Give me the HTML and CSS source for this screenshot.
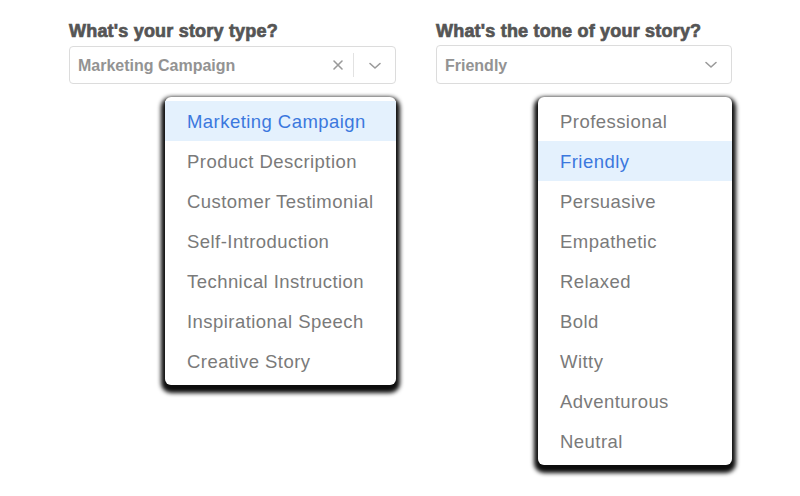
FILE: index.html
```html
<!DOCTYPE html>
<html>
<head>
<meta charset="utf-8">
<link rel="stylesheet" href="styles.css">
</head>
<body>
<div class="page">
  <div class="field field-type">
    <div class="label">What's your story type?</div>
    <div class="select">
      <span class="value">Marketing Campaign</span>
      <span class="clear">
        <svg width="12" height="12" viewBox="0 0 12 12"><path d="M2 2 L10 10 M10 2 L2 10" stroke="#9a9a9a" stroke-width="1.6" fill="none" stroke-linecap="round"/></svg>
      </span>
      <span class="sep"></span>
      <span class="chev">
        <svg width="14" height="8" viewBox="0 0 14 8"><path d="M2 1.5 L7 6 L12 1.5" stroke="#9a9a9a" stroke-width="1.6" fill="none" stroke-linecap="round" stroke-linejoin="round"/></svg>
      </span>
    </div>
    <div class="menu menu-type">
      <div class="item active">Marketing Campaign</div>
      <div class="item">Product Description</div>
      <div class="item">Customer Testimonial</div>
      <div class="item">Self-Introduction</div>
      <div class="item">Technical Instruction</div>
      <div class="item">Inspirational Speech</div>
      <div class="item">Creative Story</div>
    </div>
  </div>
  <div class="field field-tone">
    <div class="label label-tone">What's the tone of your story?</div>
    <div class="select">
      <span class="value">Friendly</span>
      <span class="chev chev-solo">
        <svg width="14" height="8" viewBox="0 0 14 8"><path d="M2 1.5 L7 6 L12 1.5" stroke="#9a9a9a" stroke-width="1.6" fill="none" stroke-linecap="round" stroke-linejoin="round"/></svg>
      </span>
    </div>
    <div class="menu menu-tone">
      <div class="item">Professional</div>
      <div class="item active">Friendly</div>
      <div class="item">Persuasive</div>
      <div class="item">Empathetic</div>
      <div class="item">Relaxed</div>
      <div class="item">Bold</div>
      <div class="item">Witty</div>
      <div class="item">Adventurous</div>
      <div class="item">Neutral</div>
    </div>
  </div>
</div>
</body>
</html>
```

FILE: styles.css
```css
html, body {
  margin: 0;
  padding: 0;
  background: #ffffff;
}
body {
  font-family: "Liberation Sans", Arial, sans-serif;
  width: 800px;
  height: 496px;
  overflow: hidden;
}
.page {
  display: flex;
  gap: 40px;
  padding: 21px 0 0 69px;
}
.field {
  display: flex;
  flex-direction: column;
  align-items: flex-end;
}
.field-type { width: 327px; }
.field-tone { width: 296px; }
.label {
  align-self: flex-start;
  font-size: 18px;
  font-weight: bold;
  line-height: 20px;
  color: #555555;
  letter-spacing: 0.2px;
  -webkit-text-stroke: 0.7px #555555;
  margin-bottom: 5px;
}
.label-tone { margin-bottom: 4px; }
.select {
  align-self: stretch;
  box-sizing: border-box;
  height: 38px;
  border: 1px solid #dcdcdc;
  border-radius: 4px;
  display: flex;
  align-items: center;
  padding-left: 8px;
}
.field-tone .select { height: 39px; }
.value {
  flex: 1;
  font-size: 16px;
  font-weight: bold;
  color: #939393;
  padding-top: 2px;
}
.clear {
  display: flex;
  width: 12px;
  height: 12px;
  margin-right: 9px;
}
.sep {
  width: 1px;
  height: 24px;
  background: #e2e2e2;
}
.chev {
  display: flex;
  width: 14px;
  height: 8px;
  margin: 1px 13px 0 14px;
}
.chev-solo { margin-right: 13px; }
.menu {
  margin-top: 13px;
  background: #ffffff;
  border-radius: 6px;
  padding: 4px 0;
  box-shadow: 0 4px 4px 4px rgba(0,0,0,0.95);
}
.menu-type { width: 231px; }
.menu-tone { width: 194px; }
.item {
  box-sizing: border-box;
  height: 40px;
  line-height: 40px;
  padding: 1px 0 0 22px;
  font-size: 18.5px;
  letter-spacing: 0.45px;
  color: #7a7a7a;
  white-space: nowrap;
}
.item.active {
  background: #e4f1fd;
  color: #3b78de;
}
```
